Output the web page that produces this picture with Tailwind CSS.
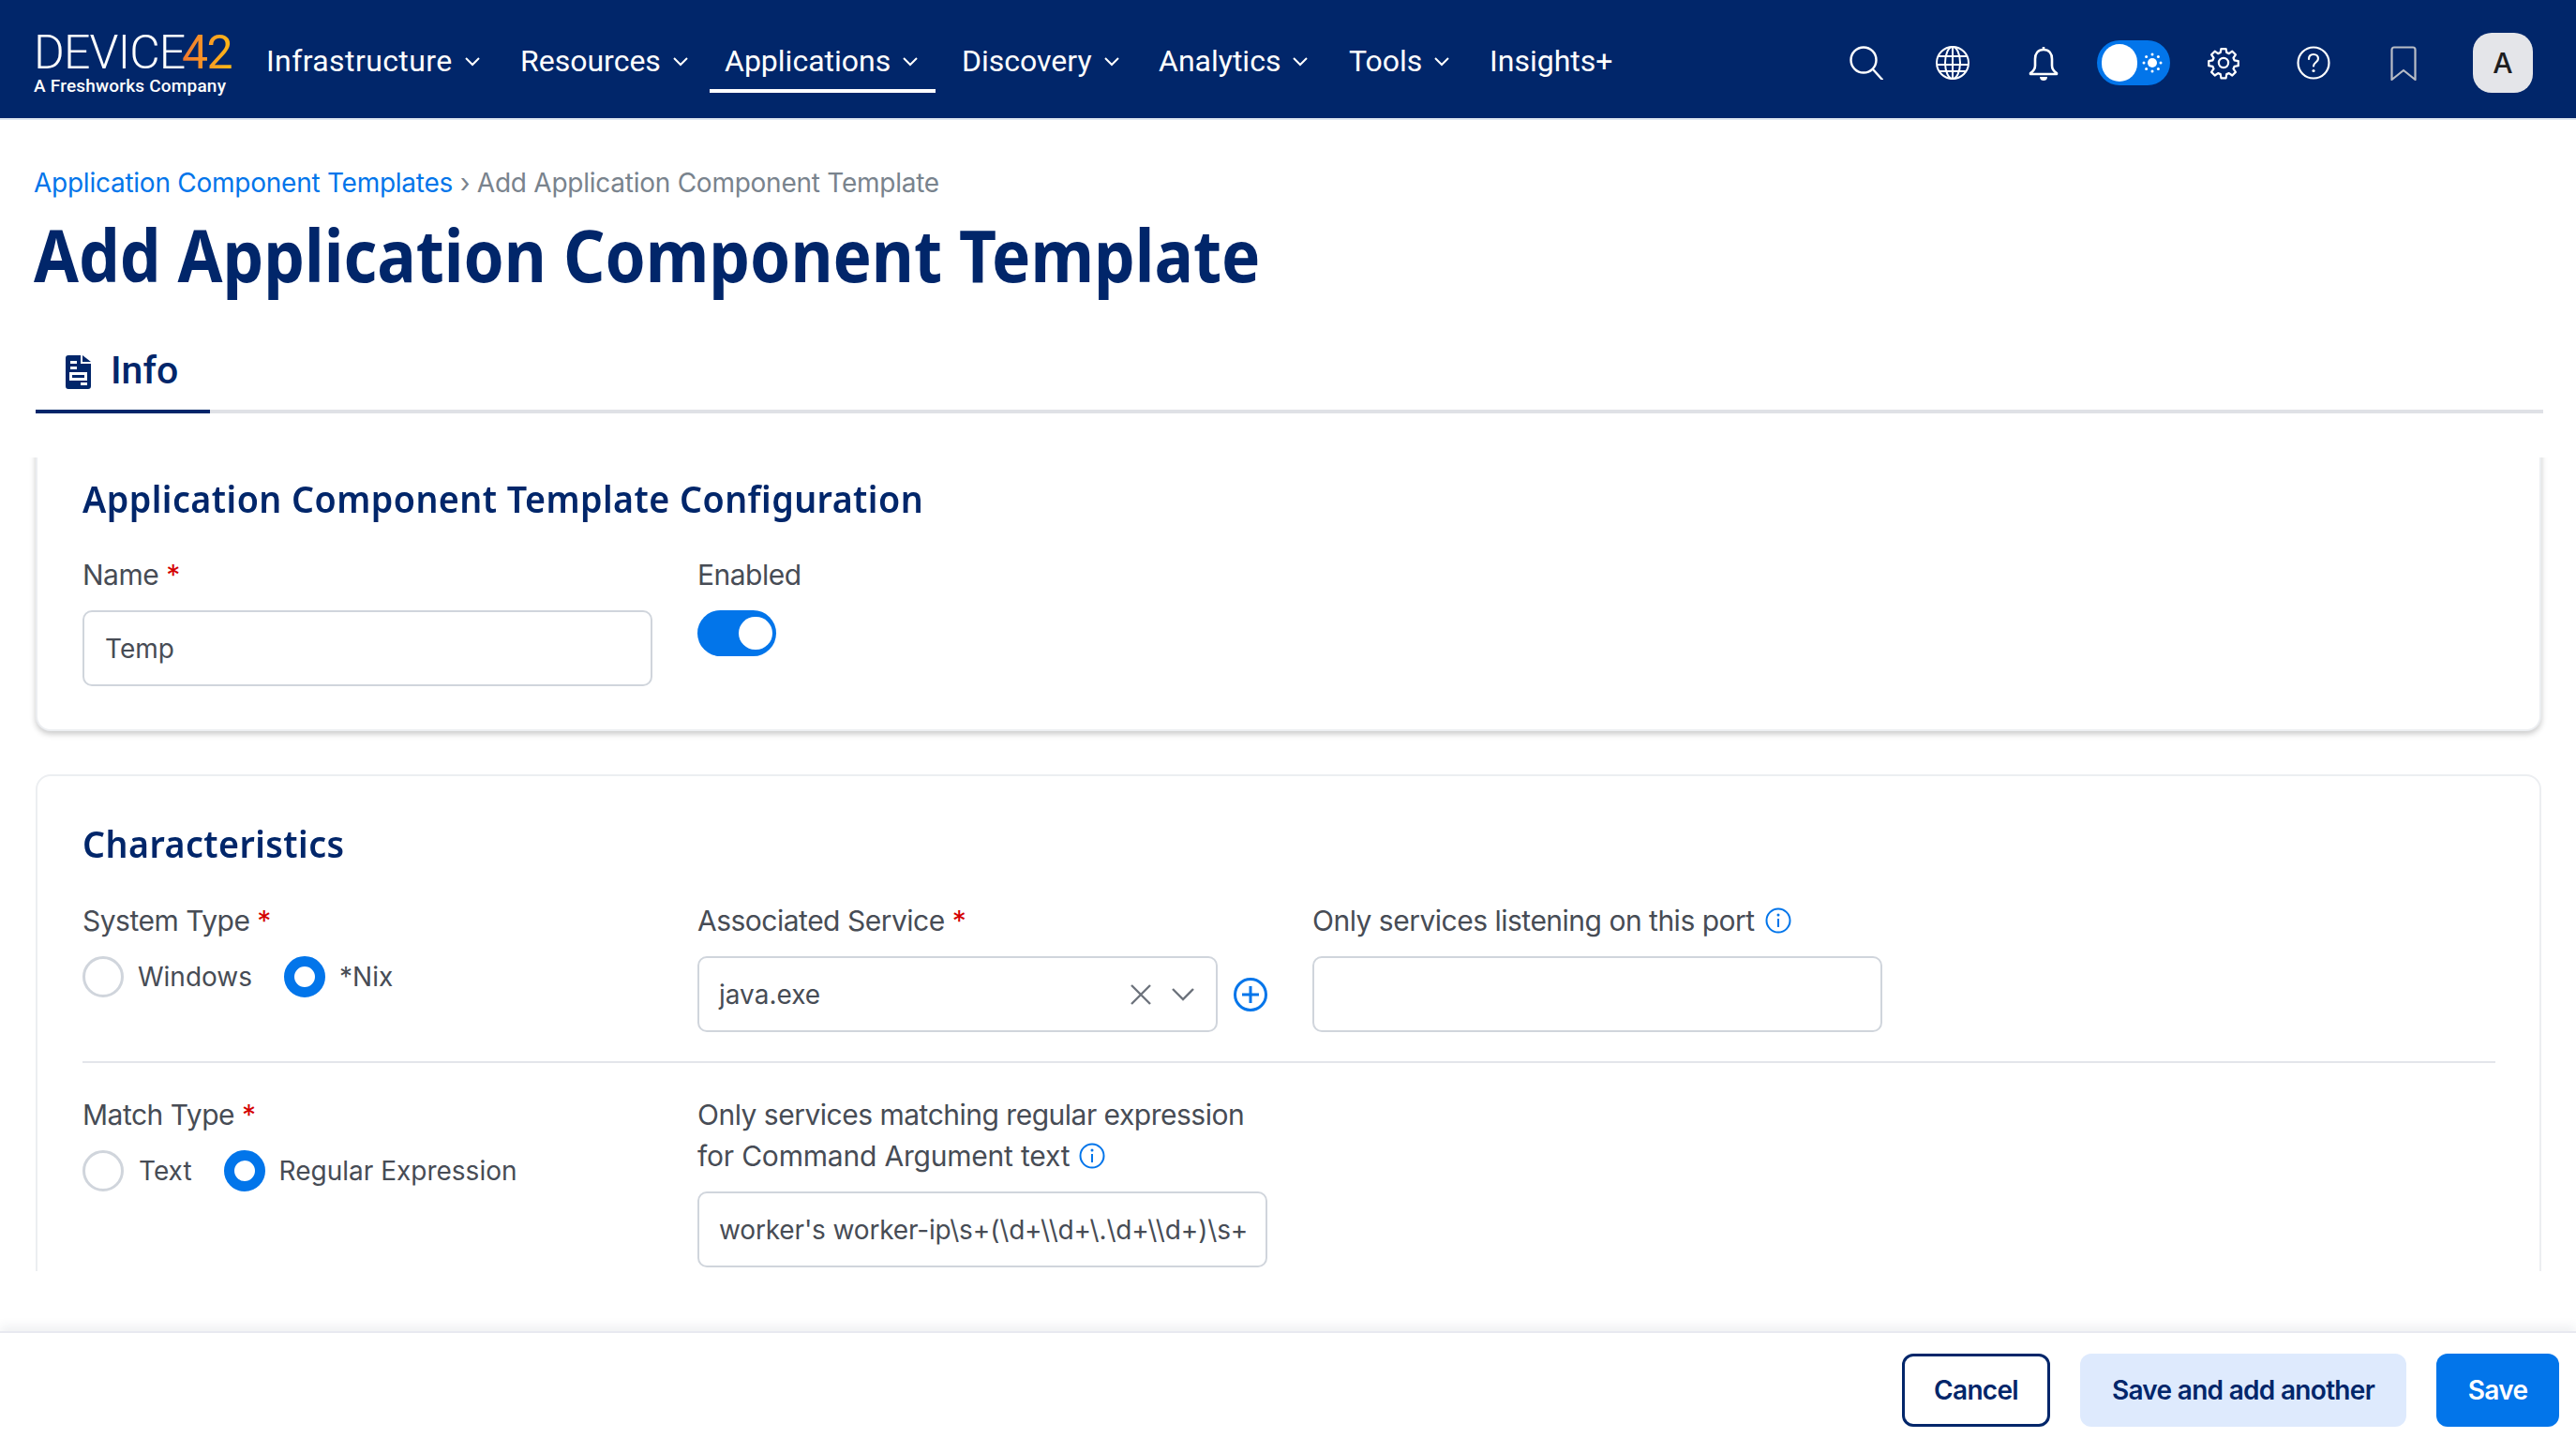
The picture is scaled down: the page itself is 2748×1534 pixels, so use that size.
<!DOCTYPE html>
<html lang="en">
  <head>
    <meta charset="UTF-8" />
    <script src="https://cdn.jsdelivr.net/npm/@tailwindcss/browser@4"></script>
    <title>Add Application Component Template</title>
  </head>
  <body class="bg-white font-['Inter',sans-serif] text-[#474c55]">
    <div class="h-[1534px] w-[2748px] flex flex-col overflow-hidden">
      <!-- top nav -->
      <nav class="h-[128px] shrink-0 bg-[#01266a] border-b-2 border-[#dfe7f0] flex items-center pt-[8px] pl-[36px] pr-[46px] text-white font-['Roboto',sans-serif]">
        <div class="w-[209px] mr-[23px]">
          <div class="flex h-[50px] items-center text-[50px] leading-[50px] font-light font-['Roboto',sans-serif]">
            <span class="w-[158px] tracking-[-0.8px]">DEVICE</span><span class="font-normal text-transparent bg-clip-text bg-linear-to-r from-[#f2762e] to-[#fdb913] tracking-[-1.5px]">42</span>
          </div>
          <div class="text-[19px] leading-[22px] font-medium whitespace-nowrap tracking-[0.2px]">A Freshworks Company</div>
        </div>
        <div class="flex items-center text-[32px] h-[100px]">
          <a class="flex items-center w-[271px] h-[64px] pl-[16px] border-b-4 border-transparent tracking-[0.4px]">Infrastructure<svg class="w-[18px] h-[11px] ml-[12px]" viewBox="0 0 18 11" fill="none" stroke="currentColor" stroke-width="2"><path d="M2 2l7 7 7-7"/></svg></a>
          <a class="flex items-center w-[218px] h-[64px] pl-[16px] border-b-4 border-transparent">Resources<svg class="w-[18px] h-[11px] ml-[12px]" viewBox="0 0 18 11" fill="none" stroke="currentColor" stroke-width="2"><path d="M2 2l7 7 7-7"/></svg></a>
          <a class="flex items-center w-[241px] mr-[12px] h-[64px] pl-[16px] border-b-4 border-white">Applications<svg class="w-[18px] h-[11px] ml-[12px]" viewBox="0 0 18 11" fill="none" stroke="currentColor" stroke-width="2"><path d="M2 2l7 7 7-7"/></svg></a>
          <a class="flex items-center w-[210px] h-[64px] pl-[16px] border-b-4 border-transparent">Discovery<svg class="w-[18px] h-[11px] ml-[12px]" viewBox="0 0 18 11" fill="none" stroke="currentColor" stroke-width="2"><path d="M2 2l7 7 7-7"/></svg></a>
          <a class="flex items-center w-[203px] h-[64px] pl-[16px] border-b-4 border-transparent">Analytics<svg class="w-[18px] h-[11px] ml-[12px]" viewBox="0 0 18 11" fill="none" stroke="currentColor" stroke-width="2"><path d="M2 2l7 7 7-7"/></svg></a>
          <a class="flex items-center w-[150px] h-[64px] pl-[16px] border-b-4 border-transparent">Tools<svg class="w-[18px] h-[11px] ml-[12px]" viewBox="0 0 18 11" fill="none" stroke="currentColor" stroke-width="2"><path d="M2 2l7 7 7-7"/></svg></a>
          <a class="flex items-center h-[64px] pl-[16px] border-b-4 border-transparent">Insights+</a>
        </div>
        <div class="ml-auto flex items-center">
          <svg class="w-[36px] h-[36px]" viewBox="0 0 36 36" fill="none" stroke="white" stroke-width="2.4"><circle cx="15" cy="15" r="13.5"/><path d="M25 25l10 11" stroke-linecap="round"/></svg>
          <svg class="w-[36px] h-[36px] ml-[56px]" viewBox="0 0 36 36" fill="none" stroke="white" stroke-width="2"><circle cx="18" cy="18" r="17"/><ellipse cx="18" cy="18" rx="8" ry="17"/><path d="M3 11h30M1 20h34M3 27h30M18 1v34"/></svg>
          <svg class="w-[32px] h-[37px] ml-[63px]" viewBox="0 0 32 37" fill="none" stroke="white" stroke-width="2.6" stroke-linejoin="round"><path d="M16 4c-6 0-9 4-9 10v7c0 4-2 6-5 8v1h28v-1c-3-2-5-4-5-8v-7c0-6-3-10-9-10z"/><path d="M16 1v3"/><path d="M12 33h8c0 3-2 4-4 4s-4-1-4-4z" fill="white" stroke="none"/></svg>
          <div class="relative w-[78px] h-[48px] ml-[41px] rounded-full bg-[#0275ea]">
            <div class="absolute left-[5px] top-[4px] w-[38px] h-[40px] rounded-full bg-white"></div>
            <svg class="absolute right-[8px] top-[13px] w-[22px] h-[22px]" viewBox="0 0 22 22" fill="white"><circle cx="11" cy="11" r="5"/><circle cx="11" cy="2" r="1.5"/><circle cx="11" cy="20" r="1.5"/><circle cx="2" cy="11" r="1.5"/><circle cx="20" cy="11" r="1.5"/><circle cx="4.6" cy="4.6" r="1.5"/><circle cx="17.4" cy="4.6" r="1.5"/><circle cx="4.6" cy="17.4" r="1.5"/><circle cx="17.4" cy="17.4" r="1.5"/></svg>
          </div>
          <svg class="w-[36px] h-[38px] ml-[39px]" viewBox="0 0 24 24" fill="none" stroke="white" stroke-width="1.5" stroke-linejoin="round"><path d="M10.3 2h3.4l.5 2.7 1.7.7 2.3-1.6 2.4 2.4-1.6 2.3.7 1.7 2.8.5v3.4l-2.8.5-.7 1.7 1.6 2.3-2.4 2.4-2.3-1.6-1.7.7-.5 2.8h-3.4l-.5-2.8-1.7-.7-2.3 1.6-2.4-2.4 1.6-2.3-.7-1.7-2.8-.5v-3.4l2.8-.5.7-1.7-1.6-2.3 2.4-2.4 2.3 1.6 1.7-.7z"/><circle cx="12" cy="12" r="3.4"/></svg>
          <svg class="w-[36px] h-[36px] ml-[60px]" viewBox="0 0 36 36" fill="none" stroke="white" stroke-width="2.2"><circle cx="18" cy="18" r="16.5"/><path d="M13 14c0-3 2-5 5-5s5 2 5 4.5c0 4-5 4-5 8" stroke-linecap="round"/><circle cx="18" cy="26.5" r="1.6" fill="white" stroke="none"/></svg>
          <svg class="w-[28px] h-[37px] ml-[64px]" viewBox="0 0 28 37" fill="none" stroke="#b9bdc6" stroke-width="2.2" stroke-linejoin="round"><path d="M1.5 36V4c0-1.5 1-2.5 2.5-2.5h20c1.500 0 2.500 1 2.500 2.500v32L14 26z"/></svg>
          <div class="w-[64px] h-[64px] ml-[60px] rounded-[20px] bg-[#e4e5e9] text-[#1d1d1f] flex items-center justify-center text-[30px] font-['Inter',sans-serif] font-medium">A</div>
        </div>
      </nav>

      <!-- page head -->
      <div class="px-[36px] shrink-0">
        <div class="mt-[49px] text-[28px] leading-[36px] tracking-[-0.25px] text-[#79838d] whitespace-nowrap"><a class="text-[#0275ea]">Application Component Templates</a> › Add Application Component Template</div>
        <h1 class="mt-[14px] text-[77px] leading-[90px] font-bold text-[#01266a] font-['Noto_Sans',sans-serif] origin-left scale-x-[0.9] whitespace-nowrap">Add Application Component Template</h1>
      </div>

      <!-- tabs -->
      <div class="shrink-0 mt-[55px] ml-[38px] w-[2675px] h-[69px] border-b-[4px] border-[#dfe1e6] flex">
        <div class="w-[186px] h-[69px] border-b-[4px] border-[#01266a] flex items-start pl-[32px] pt-[5px] text-[#01266a]">
          <svg class="w-[27px] h-[36px] mt-[2px]" viewBox="0 0 27 36" fill="#01266a"><path fill-rule="evenodd" d="M3 0h13v9h11v24a3 3 0 0 1-3 3H3a3 3 0 0 1-3-3V3a3 3 0 0 1 3-3zM5 6v3h7V6zM5 12v3h7v-3zM4 18v9h19v-9zM7 21h13v3H7zM16 29v3h7v-3z"/><path d="M18 0l9 7h-9z"/></svg>
          <span class="ml-[21px] text-[41px] leading-[36px] font-['Roboto',sans-serif] font-medium">Info</span>
        </div>
      </div>

      <!-- scrolling form area -->
      <div class="shrink-0 h-[868px] mt-[47px] overflow-hidden px-[38px]">
        <div class="w-[2673px] -mt-[20px] rounded-[16px] border-2 border-[#eceef1] shadow-[0_3px_6px_rgba(0,0,0,0.22)] pl-[48px] pt-[37px] h-[312px] bg-white">
          <h2 class="text-[40px] leading-[50px] font-semibold text-[#01266a] font-['Noto_Sans',sans-serif] origin-left scale-x-[0.94] tracking-[0.5px] whitespace-nowrap">Application Component Template Configuration</h2>
          <div class="grid grid-cols-[608px_608px] gap-x-[48px] mt-[38px]">
            <div>
              <label class="block text-[30px] leading-[36px] tracking-[-0.5px]">Name <span class="text-[#d40000]">*</span></label>
              <input value="Temp" class="mt-[20px] w-[608px] h-[81px] rounded-[10px] border-2 border-[#d0d5dc] px-[22px] text-[28px] text-[#474c55]" />
            </div>
            <div>
              <label class="block text-[30px] leading-[36px] tracking-[-0.5px]">Enabled</label>
              <div class="relative mt-[20px] w-[84px] h-[49px] rounded-full bg-[#0275ea]">
                <div class="absolute right-[4px] top-[7px] w-[36px] h-[35px] rounded-full bg-white"></div>
              </div>
            </div>
          </div>
        </div>

        <div class="w-[2673px] mt-[46px] rounded-[16px] border-2 border-[#eceef1] pl-[48px] pt-[47px] pb-[20px] bg-white">
          <h2 class="text-[40px] leading-[50px] font-semibold text-[#01266a] font-['Noto_Sans',sans-serif] origin-left scale-x-[0.94] tracking-[0.5px] whitespace-nowrap">Characteristics</h2>
          <div class="grid grid-cols-[608px_608px_608px] gap-x-[48px] mt-[39px] pb-[31px] w-[2574px] border-b-2 border-[#e3e5ea]">
            <div>
              <label class="block text-[30px] leading-[36px] tracking-[-0.5px]">System Type <span class="text-[#d40000]">*</span></label>
              <div class="flex items-center mt-[20px] text-[28px]">
                <span class="w-[44px] h-[44px] rounded-full border-[3px] border-[#d0d5dc]"></span><span class="ml-[15px]">Windows</span>
                <span class="ml-[34px] w-[44px] h-[44px] rounded-full border-[11px] border-[#0275ea]"></span><span class="ml-[15px]">*Nix</span>
              </div>
            </div>
            <div>
              <label class="block text-[30px] leading-[36px] tracking-[-0.5px]">Associated Service <span class="text-[#d40000]">*</span></label>
              <div class="flex items-center mt-[20px]">
                <div class="w-[555px] h-[81px] rounded-[10px] border-2 border-[#d0d5dc] pl-[21px] pr-[23px] flex items-center text-[28px]">
                  <span class="flex-1">java.exe</span>
                  <svg class="w-[22px] h-[22px]" viewBox="0 0 22 22" fill="none" stroke="#6d737c" stroke-width="2.4"><path d="M1 1l20 20M21 1L1 21"/></svg>
                  <svg class="w-[24px] h-[14px] ml-[22px]" viewBox="0 0 24 14" fill="none" stroke="#6d737c" stroke-width="2.4"><path d="M1 1l11 11L23 1"/></svg>
                </div>
                <svg class="w-[36px] h-[36px] ml-[17px]" viewBox="0 0 36 36" fill="none" stroke="#0275ea" stroke-width="3"><circle cx="18" cy="18" r="16.500"/><path d="M18 9v18M9 18h18"/></svg>
              </div>
            </div>
            <div>
              <label class="flex items-center text-[30px] leading-[36px] tracking-[-0.5px]">Only services listening on this port
                <svg class="w-[28px] h-[28px] ml-[11px]" viewBox="0 0 28 28" fill="none" stroke="#0275ea" stroke-width="2"><circle cx="14" cy="14" r="12.500"/><path d="M14 12v9"/><circle cx="14" cy="8" r="1.500" fill="#0275ea" stroke="none"/></svg>
              </label>
              <input class="mt-[20px] w-[608px] h-[81px] rounded-[10px] border-2 border-[#d0d5dc] px-[22px] text-[28px]" />
            </div>
          </div>
          <div class="grid grid-cols-[608px_608px] gap-x-[48px] mt-[37px]">
            <div>
              <label class="block text-[30px] leading-[36px] tracking-[-0.5px]">Match Type <span class="text-[#d40000]">*</span></label>
              <div class="flex items-center mt-[20px] text-[28px]">
                <span class="w-[44px] h-[44px] rounded-full border-[3px] border-[#d0d5dc]"></span><span class="ml-[16px]">Text</span>
                <span class="ml-[34px] w-[44px] h-[44px] rounded-full border-[11px] border-[#0275ea]"></span><span class="ml-[15px]">Regular Expression</span>
              </div>
            </div>
            <div class="-mt-[4px]">
              <label class="block text-[30px] leading-[44px] tracking-[-0.5px]">Only services matching regular expression<br /><span class="tracking-[-0.2px]">for Command Argument text</span>
                <svg class="inline w-[28px] h-[28px] ml-[2px] align-[-3px]" viewBox="0 0 28 28" fill="none" stroke="#0275ea" stroke-width="2"><circle cx="14" cy="14" r="12.500"/><path d="M14 12v9"/><circle cx="14" cy="8" r="1.500" fill="#0275ea" stroke="none"/></svg>
              </label>
              <input value="worker's worker-ip\s+(\d+\\d+\.\d+\\d+)\s+" class="mt-[16px] w-[608px] h-[81px] rounded-[10px] border-2 border-[#d0d5dc] pl-[21px] pr-[4px] text-[28px] tracking-[-0.15px]" />
            </div>
          </div>
        </div>
      </div>

      <!-- footer -->
      <div class="flex-1 mt-[64px] border-t-2 border-[#e8e9f0] shadow-[0_-6px_10px_rgba(40,50,90,0.07)] bg-white flex items-start justify-end pt-[22px] pr-[18px] text-[28px] font-semibold tracking-[-0.7px]">
        <button class="w-[158px] h-[78px] rounded-[12px] border-[3px] border-[#01266a] text-[#01266a]">Cancel</button>
        <button class="w-[348px] h-[78px] ml-[32px] rounded-[12px] bg-[#deeafd] text-[#01266a]">Save and add another</button>
        <button class="w-[131px] h-[78px] ml-[32px] rounded-[12px] bg-[#0275ea] text-white">Save</button>
      </div>
    </div>
  </body>
</html>
